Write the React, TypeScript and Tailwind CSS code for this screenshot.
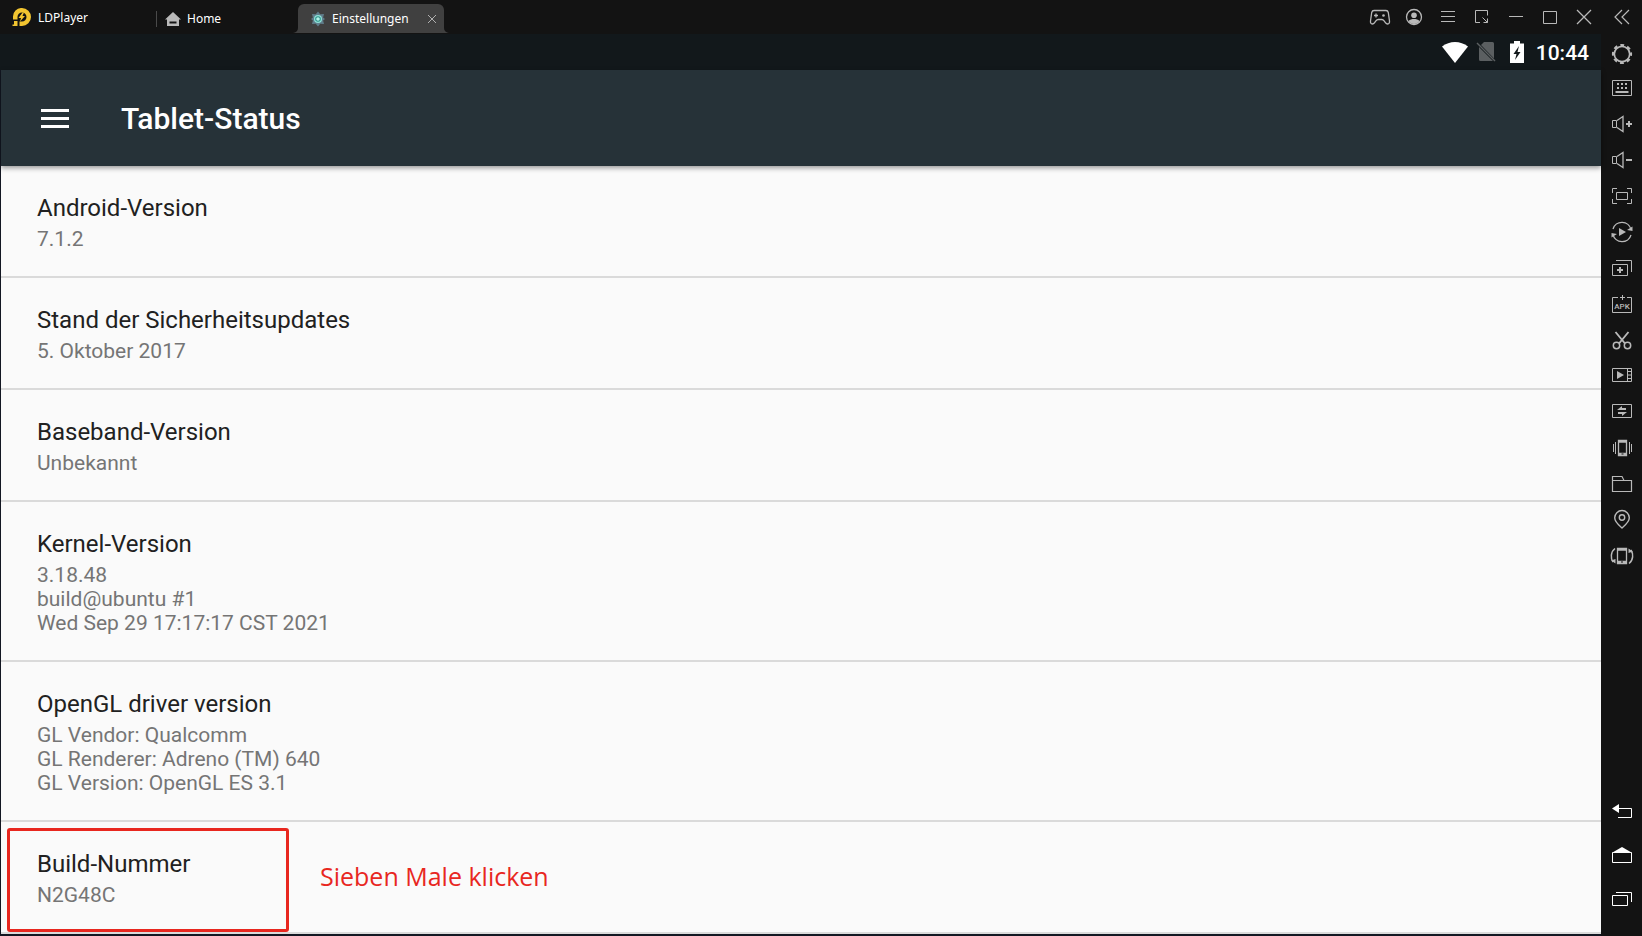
import type { ReactNode } from 'react';

interface StatusEntry {
  title: string;
  lines: string[];
  note?: string;
}

interface IconItem {
  label: string;
  icon: ReactNode;
}

const entries: StatusEntry[] = [
  { title: 'Android-Version', lines: ['7.1.2'] },
  { title: 'Stand der Sicherheitsupdates', lines: ['5. Oktober 2017'] },
  { title: 'Baseband-Version', lines: ['Unbekannt'] },
  { title: 'Kernel-Version', lines: ['3.18.48', 'build@ubuntu #1', 'Wed Sep 29 17:17:17 CST 2021'] },
  {
    title: 'OpenGL driver version',
    lines: ['GL Vendor: Qualcomm', 'GL Renderer: Adreno (TM) 640', 'GL Version: OpenGL ES 3.1'],
  },
  { title: 'Build-Nummer', lines: ['N2G48C'], note: 'Sieben Male klicken' },
];

// All window and toolbar icons share a 24px grid
const Icon = ({ children }: { children: ReactNode }) => (
  <svg viewBox="0 0 24 24" className="size-6 shrink-0" fill="none" stroke="currentColor" strokeWidth="1" aria-hidden="true">
    {children}
  </svg>
);

const Speaker = () => (
  <>
    <path d="M2.5 8.5h4v7h-4z" />
    <path d="M7 8.5l6-4v15l-6-4" strokeWidth="1.3" />
  </>
);

const windowActions: IconItem[] = [
  {
    label: 'Gamepad',
    icon: (
      <>
        <path d="M6 5.5h12c1.2 0 2 .8 2.3 2l1.2 8.5c.2 2-.6 3-1.8 3-1 0-1.7-.5-2.3-1.4l-1.3-1.8c-.6-.8-1.3-1.3-2.3-1.3h-3.6c-1 0-1.7.5-2.3 1.3l-1.3 1.8C6 18.5 5.3 19 4.3 19c-1.2 0-2-1-1.8-3l1.2-8.5c.3-1.2 1.1-2 2.3-2z" strokeWidth="1.3" />
        <path d="M6 10.5h4M8 8.5v4" strokeWidth="1.3" />
        <circle cx="15.5" cy="10.5" r="1.3" fill="currentColor" stroke="none" />
      </>
    ),
  },
  {
    label: 'Account',
    icon: (
      <>
        <circle cx="12" cy="12" r="7.5" strokeWidth="1.3" />
        <circle cx="12" cy="10.2" r="2.8" fill="currentColor" stroke="none" />
        <path d="M6.5 16c1.5-1.6 3.4-2 5.5-2s4 .4 5.5 2c-1.3 2-3.3 3-5.5 3s-4.2-1-5.5-3z" fill="currentColor" stroke="none" />
      </>
    ),
  },
  { label: 'Menu', icon: <path d="M5 6.5h14M5 11.5h14M5 16.5h14" /> },
  {
    label: 'Mini mode',
    icon: <path d="M10 17.5H5.5v-12h12v5M12.5 12.5l5 5M17.5 13.5v4h-4" />,
  },
  { label: 'Minimize', icon: <path d="M5 11.5h14" /> },
  { label: 'Maximize', icon: <path d="M5.5 6.5h13v12h-13z" /> },
  { label: 'Close', icon: <path d="M5 5l14 14M19 5L5 19" strokeWidth="1.3" /> },
];

const tools: IconItem[] = [
  {
    label: 'Settings',
    icon: (
      <>
        <circle cx="12" cy="14" r="7.7" strokeWidth="1.7" />
        <circle cx="12" cy="14" r="9" strokeWidth="2.2" strokeDasharray="3.8 3.269" strokeDashoffset="1.9" />
      </>
    ),
  },
  {
    label: 'Keyboard',
    icon: (
      <>
        <path d="M2.5 4.5h19v15h-19z" />
        <path d="M7 8h2M11 8h2M15 8h2M7 12h2M11 12h2M15 12h2" strokeWidth="2" />
        <path d="M5.5 16h13" strokeWidth="2" />
      </>
    ),
  },
  {
    label: 'Volume up',
    icon: (
      <>
        <Speaker />
        <path d="M16 12h6M19 9v6" strokeWidth="2" />
      </>
    ),
  },
  {
    label: 'Volume down',
    icon: (
      <>
        <Speaker />
        <path d="M16 12h6" strokeWidth="2" />
      </>
    ),
  },
  {
    label: 'Full screen',
    icon: (
      <>
        <path d="M2.5 9V4.5H7M17 4.5h4.5V9M21.5 15v4.5H17M7 19.5H2.5V15" />
        <path d="M6.5 8.5h11v7h-11z" />
      </>
    ),
  },
  {
    label: 'Operation recorder',
    icon: (
      <>
        <path d="M3 9a9.300 9.300 0 0 1 18 .5M21 15a9.300 9.300 0 0 1-18-.5" strokeWidth="1.3" />
        <path d="M22.500 6.500v4.500l-5.500-1zM1.500 17.500V13l5.500 1zM9 8l7 4-7 4z" fill="currentColor" stroke="none" />
      </>
    ),
  },
  {
    label: 'Multi instance',
    icon: (
      <>
        <path d="M6 4.5h15.500V16M2.500 8.500h15v11h-15z" />
        <path d="M7 14h6M10 11v6" strokeWidth="2" />
      </>
    ),
  },
  {
    label: 'Install APK',
    icon: (
      <>
        <path d="M8 5.500H2.500v15h19v-15H17M10 5.500h5M12.500 3v5" />
        <text x="12" y="17" textAnchor="middle" fontSize="8" fontWeight="500" fontFamily="Roboto, sans-serif" fill="currentColor" stroke="none">
          APK
        </text>
      </>
    ),
  },
  {
    label: 'Screenshot',
    icon: (
      <>
        <path d="M5.500 4l9.500 11.500M18.500 4L9 15.500" strokeWidth="1.900" />
        <circle cx="6.500" cy="17.500" r="3.200" strokeWidth="1.500" />
        <circle cx="17.500" cy="17.500" r="3.200" strokeWidth="1.500" />
      </>
    ),
  },
  {
    label: 'Video recorder',
    icon: (
      <>
        <path d="M2.500 4.500h19v13h-19zM17.500 4.500v13M17.500 7.500h4M17.500 11h4M17.500 14.500h4" />
        <path d="M7 7l7 4-7 4z" fill="currentColor" stroke="none" />
      </>
    ),
  },
  {
    label: 'Shared files',
    icon: (
      <>
        <path d="M2.500 4.500h19v13h-19z" />
        <path d="M7 10L12 6v2h4v2zM17 12l-5 4v-2H8v-2z" fill="currentColor" stroke="none" />
      </>
    ),
  },
  {
    label: 'Shake',
    icon: (
      <>
        <path d="M8.500 4.500h8v15h-8z" strokeWidth="1.300" />
        <path d="M8 5.500h9M8 18h9" strokeWidth="2.500" />
        <path d="M11.500 18h2" stroke="#131313" />
        <path d="M5.500 6v12M3.500 8v8M19.500 6v12M21.500 8v8" />
      </>
    ),
  },
  {
    label: 'Folder',
    icon: <path d="M2.500 19.500v-15H12l2 4h7.500v11zM2.500 8.500H14" strokeWidth="1.200" />,
  },
  {
    label: 'Location',
    icon: (
      <>
        <path d="M12 20c-3.500-3-7.300-6-7.300-10.200a7.300 7.300 0 0 1 14.600 0C19.300 14 15.500 17 12 20z" strokeWidth="1.400" />
        <circle cx="12" cy="9.500" r="2.700" strokeWidth="1.400" />
      </>
    ),
  },
  {
    label: 'Rotate',
    icon: (
      <>
        <path d="M7.500 4.500h9v15h-9z" strokeWidth="1.300" />
        <path d="M7 5.500h10M7 18h10" strokeWidth="2.500" />
        <path d="M11 18h2" stroke="#131313" />
        <path d="M5 4.500C.5 8 .5 14 3 18M19 19.500c4.500-3.500 4.500-9.500 2-13.500" strokeWidth="1.500" />
        <path d="M1 16.500l4.500 3V15zM23 7.500l-4.500-3V9z" fill="currentColor" stroke="none" />
      </>
    ),
  },
];

const navigation: IconItem[] = [
  {
    label: 'Back',
    icon: (
      <>
        <path d="M8 8.500h13.500v9H8" />
        <path d="M2 8.500L9 4v9z" fill="currentColor" stroke="none" />
      </>
    ),
  },
  {
    label: 'Home screen',
    icon: (
      <>
        <path d="M2.500 8.500h19v10h-19z" />
        <path d="M12 3l9.500 5.500h-19z" fill="currentColor" stroke="none" />
      </>
    ),
  },
  { label: 'Recent apps', icon: <path d="M6 4.500h15.500V14M2.500 7.500h15v10h-15z" /> },
];

const TitleBar = () => (
  <header className="flex h-[34px] justify-between bg-[#131313] text-xs text-white font-['Noto_Sans',sans-serif]">
    <nav className="flex">
      <a href="#player" className="flex w-[156px] items-center gap-[7px] pl-3">
        <svg viewBox="0 0 19 18" className="h-[18px] w-[19px]" aria-hidden="true">
          <path d="M1 10.500V9a8.500 8.500 0 0 1 9-9 9 9 0 0 1 0 18H7.500v-4.500H10A4.500 4.500 0 1 0 5.500 9v2.500H1z" fill="#f2c530" />
          <path d="M2 13h3.500v5H.5v-1.500H2zM10.500 4.500L6.500 10h2.500l-1 3.500 5-5.500h-2.500l1.500-3.500z" fill="#f2c530" />
        </svg>
        <span className="pt-0.5">LDPlayer</span>
      </a>
      <a href="#home" className="flex w-[137px] items-center pt-1">
        <span className="h-4 w-px bg-[#4a4a4a]" />
        <svg viewBox="0 0 16 14" className="ml-2 h-[14px] w-4" aria-hidden="true">
          <path d="M8 0l8 7.500h-2V14H2V7.500H0z" fill="#b9b9b9" />
          <path d="M4.500 9.500h7v2h-7z" fill="#131313" />
        </svg>
        <span className="ml-1.5">Home</span>
      </a>
      <div className="flex items-end pb-px">
        <svg viewBox="0 0 5 5" className="size-[5px]" aria-hidden="true">
          <path d="M5 0v5H0a5 5 0 0 0 5-5z" fill="#404040" />
        </svg>
        <div className="flex h-[29px] w-[146px] items-center rounded-t-md bg-[#404040] pl-3">
          <svg viewBox="0 0 16 16" className="size-4" aria-hidden="true">
            <path d="M8 .5l2.200 2.800 3.800-.3-.9 3.500L15 8l-1.900 1.500.9 3.500-3.800-.3L8 15.500l-2.200-2.800-3.800.3.900-3.500L1 8l1.900-1.500L2 3l3.800.3z" fill="#607d8b" />
            <circle cx="8" cy="8" r="4" fill="#8fe3d8" />
            <circle cx="8" cy="8" r="2.800" fill="#2f8f89" />
            <circle cx="8" cy="8" r="1.800" fill="#b5f3ea" />
          </svg>
          <a href="#settings" className="ml-1.5">Einstellungen</a>
          <button aria-label="Close tab" className="mr-2 ml-auto text-[#b0b0b0]">
            <svg viewBox="0 0 8 8" className="size-2" stroke="currentColor" aria-hidden="true">
              <path d="M0 0l8 8M8 0L0 8" />
            </svg>
          </button>
        </div>
        <svg viewBox="0 0 5 5" className="size-[5px]" aria-hidden="true">
          <path d="M0 0v5h5a5 5 0 0 1-5-5z" fill="#404040" />
        </svg>
      </div>
    </nav>
    <div className="flex text-[#b9b9b9]">
      {windowActions.map((action) => (
        <button key={action.label} aria-label={action.label} className="flex w-[34px] items-center justify-center">
          <Icon>{action.icon}</Icon>
        </button>
      ))}
    </div>
  </header>
);

const StatusBar = () => (
  <div className="flex h-9 items-center justify-end bg-[#12181b] pr-3 text-white">
    <svg viewBox="0 0 26 21" className="h-[21px] w-[26px]" aria-hidden="true">
      <path d="M0 4.500C7.500-1.500 18.500-1.500 26 4.500L13 21z" fill="currentColor" />
    </svg>
    <svg viewBox="0 0 20 20" className="ml-2 size-5" aria-hidden="true">
      <path d="M8 0h8.500a1.500 1.500 0 0 1 1.500 1.500v15L5 3zM3 5l14 14H4.500A1.500 1.500 0 0 1 3 17.500z" fill="#5b5f61" />
      <path d="M1 1l18 18" stroke="#5b5f61" strokeWidth="1.500" />
    </svg>
    <svg viewBox="0 0 14 22" className="ml-3.5 h-[22px] w-[14px]" aria-hidden="true">
      <path d="M4 0h6v2.500h4V22H0V2.500h4z" fill="currentColor" />
      <path d="M9 5L3.500 13H6.500L5 19l5.500-8H7.500z" fill="#12181b" />
    </svg>
    <span className="ml-3 pt-0.5 text-[21px] leading-6 font-medium">10:44</span>
  </div>
);

const StatusRow = ({ entry }: { entry: StatusEntry }) => (
  <li className="relative border-b-2 border-[#dadada] bg-[#fafafa] px-9 pt-7 pb-[25px]">
    <h2 className="text-2xl leading-7 text-[#212121]">{entry.title}</h2>
    <div className="pt-[5px] text-[21px] leading-6 text-[#757575]">
      {entry.lines.map((line) => (
        <p key={line}>{line}</p>
      ))}
    </div>
    {entry.note && (
      <div className="absolute inset-x-1.5 top-1.5 flex h-[104px] gap-[31px]">
        <span className="w-[282px] rounded-[3px] border-3 border-[#e8271f]" />
        <strong className="pt-8 text-[25px] leading-8 font-normal text-[#e8271f] font-['Open_Sans',sans-serif]">{entry.note}</strong>
      </div>
    )}
  </li>
);

const ToolBar = () => (
  <aside className="flex w-[41px] shrink-0 flex-col border-l border-[#131313] bg-[#131313] pb-3.5 text-[#b9b9b9]">
    <button aria-label="Collapse" className="flex h-[34px] items-center justify-center">
      <Icon>
        <path d="M12 5l-7 7 7 7M19 5l-7 7 7 7" strokeWidth="1.200" />
      </Icon>
    </button>
    {tools.map((tool) => (
      <button key={tool.label} aria-label={tool.label} className="flex h-9 items-center justify-center">
        <Icon>{tool.icon}</Icon>
      </button>
    ))}
    <div className="mt-auto flex flex-col text-white">
      {navigation.map((item) => (
        <button key={item.label} aria-label={item.label} className="flex h-11 items-center justify-center">
          <Icon>{item.icon}</Icon>
        </button>
      ))}
    </div>
  </aside>
);

export default function App() {
  return (
    <div className="flex min-h-screen bg-[#131722] font-['Roboto',sans-serif]">
      <div className="min-w-0 flex-1">
        <TitleBar />
        <StatusBar />
        <main className="pl-px">
          <div className="relative z-10 flex h-24 items-center bg-[#263238] pl-10 text-white shadow-[0_2px_5px_rgba(0,0,0,0.4)]">
            <button aria-label="Open navigation">
              <svg viewBox="0 0 28 19" className="h-[19px] w-7" stroke="currentColor" strokeWidth="3" aria-hidden="true">
                <path d="M0 1.500h28M0 9.500h28M0 17.500h28" />
              </svg>
            </button>
            <h1 className="ml-[52px] pt-0.5 text-[30px] leading-9 font-medium">Tablet-Status</h1>
          </div>
          <ul>
            {entries.map((entry) => (
              <StatusRow key={entry.title} entry={entry} />
            ))}
          </ul>
        </main>
      </div>
      <ToolBar />
    </div>
  );
}
